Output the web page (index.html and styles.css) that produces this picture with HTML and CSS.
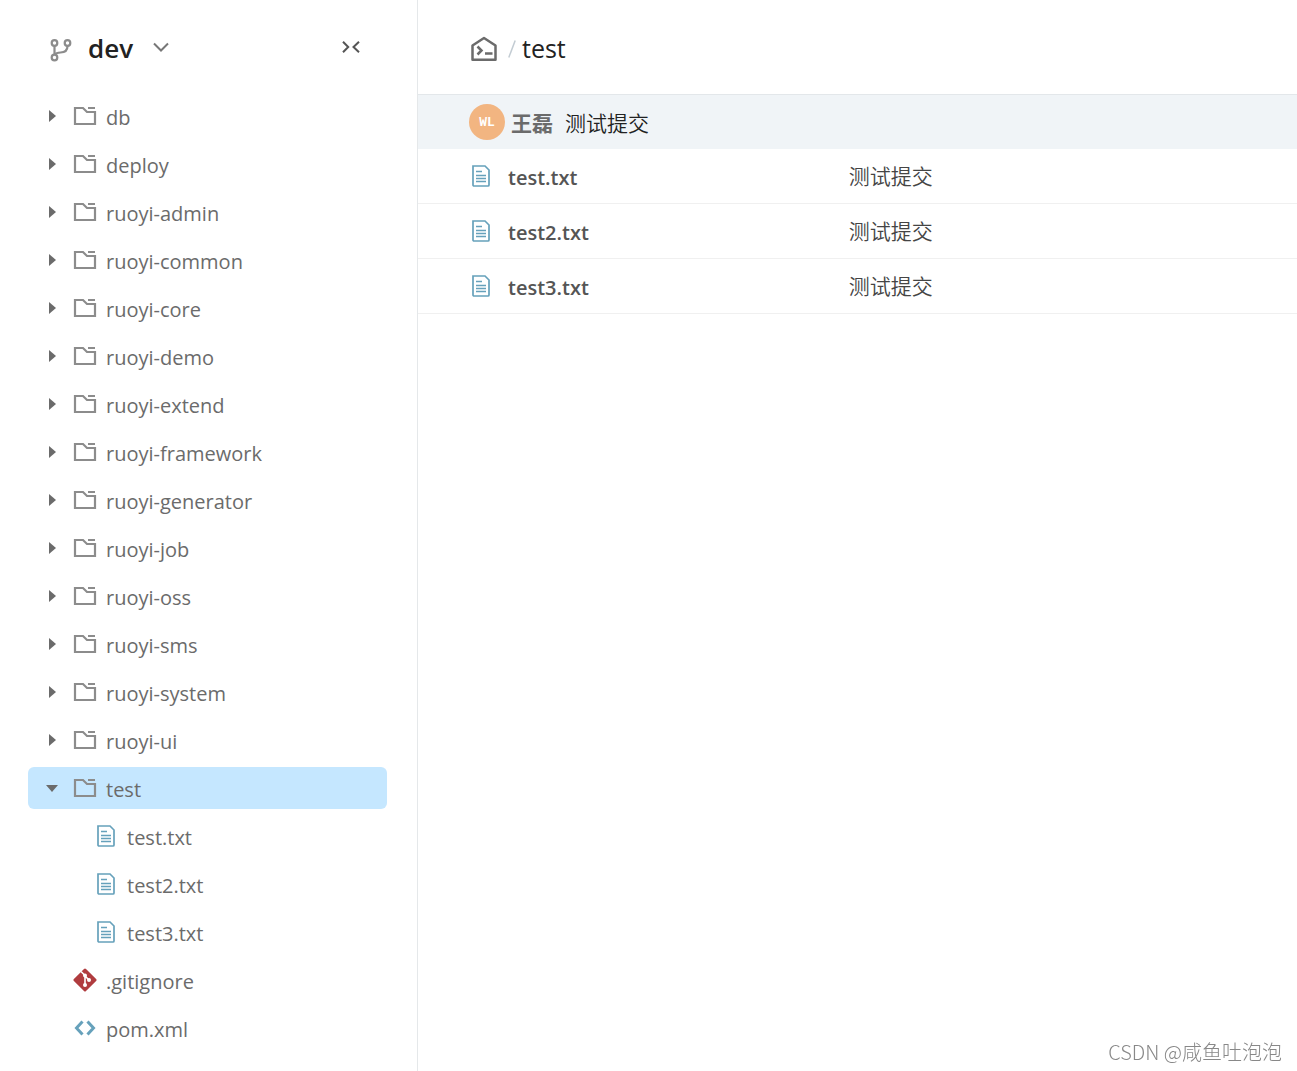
FILE: index.html
```html
<!DOCTYPE html>
<html lang="zh-CN">
<head>
<meta charset="utf-8">
<meta name="viewport" content="width=device-width, initial-scale=1">
<title>test - dev</title>
<link rel="stylesheet" href="styles.css">
</head>
<body>
<svg class="defs" aria-hidden="true">
  <symbol id="folder" viewBox="0 0 24 20"><path d="M2 2h8l4 4h8v12H2z" fill="none" stroke="currentColor" stroke-width="2.200"/><path d="M15 2h7" stroke="currentColor" stroke-width="2"/></symbol>
  <symbol id="file" viewBox="0 0 20 24"><path d="M2 2h12l4 4v15a1 1 0 0 1-1 1H3a1 1 0 0 1-1-1z" fill="none" stroke="currentColor" stroke-width="1.700"/><path d="M5 7.500h6M5 11.500h10M5 14.500h10M5 17.500h10" stroke="currentColor" stroke-width="1.500"/></symbol>
  <symbol id="caret" viewBox="0 0 8 12"><path d="M1 0 8 6 1 12z" fill="currentColor"/></symbol>
</svg>
<div class="layout">
  <aside class="sidebar">
    <header class="sidebar-head">
      <button class="branch" type="button">
        <svg class="branch-icon" viewBox="0 0 22 24"><g fill="none" stroke="currentColor" stroke-width="2.200"><circle cx="4.500" cy="5" r="2.800"/><circle cx="17.500" cy="5" r="2.800"/><circle cx="4.500" cy="19.500" r="2.800"/><path d="M4.500 8v9M17.500 8c0 5-3 6.500-7 6.500-3 0-5 1-6 2.500"/></g></svg>
        <span>dev</span>
        <svg class="chevron" viewBox="0 0 16 10"><path d="m1 1.500 7 7 7-7" fill="none" stroke="currentColor" stroke-width="2"/></svg>
      </button>
      <button class="collapse" type="button" aria-label="收起">
        <svg class="collapse-icon" viewBox="0 0 18 12"><path d="m1 .8 5.200 5.200L1 11.200M17 .8 11.500 6l5.500 5.200" fill="none" stroke="currentColor" stroke-width="2"/></svg>
      </button>
    </header>
    <ul class="tree">
      <li><button class="node" type="button"><svg class="caret"><use href="#caret"/></svg><svg class="folder"><use href="#folder"/></svg><span>db</span></button></li>
      <li><button class="node" type="button"><svg class="caret"><use href="#caret"/></svg><svg class="folder"><use href="#folder"/></svg><span>deploy</span></button></li>
      <li><button class="node" type="button"><svg class="caret"><use href="#caret"/></svg><svg class="folder"><use href="#folder"/></svg><span>ruoyi-admin</span></button></li>
      <li><button class="node" type="button"><svg class="caret"><use href="#caret"/></svg><svg class="folder"><use href="#folder"/></svg><span>ruoyi-common</span></button></li>
      <li><button class="node" type="button"><svg class="caret"><use href="#caret"/></svg><svg class="folder"><use href="#folder"/></svg><span>ruoyi-core</span></button></li>
      <li><button class="node" type="button"><svg class="caret"><use href="#caret"/></svg><svg class="folder"><use href="#folder"/></svg><span>ruoyi-demo</span></button></li>
      <li><button class="node" type="button"><svg class="caret"><use href="#caret"/></svg><svg class="folder"><use href="#folder"/></svg><span>ruoyi-extend</span></button></li>
      <li><button class="node" type="button"><svg class="caret"><use href="#caret"/></svg><svg class="folder"><use href="#folder"/></svg><span>ruoyi-framework</span></button></li>
      <li><button class="node" type="button"><svg class="caret"><use href="#caret"/></svg><svg class="folder"><use href="#folder"/></svg><span>ruoyi-generator</span></button></li>
      <li><button class="node" type="button"><svg class="caret"><use href="#caret"/></svg><svg class="folder"><use href="#folder"/></svg><span>ruoyi-job</span></button></li>
      <li><button class="node" type="button"><svg class="caret"><use href="#caret"/></svg><svg class="folder"><use href="#folder"/></svg><span>ruoyi-oss</span></button></li>
      <li><button class="node" type="button"><svg class="caret"><use href="#caret"/></svg><svg class="folder"><use href="#folder"/></svg><span>ruoyi-sms</span></button></li>
      <li><button class="node" type="button"><svg class="caret"><use href="#caret"/></svg><svg class="folder"><use href="#folder"/></svg><span>ruoyi-system</span></button></li>
      <li><button class="node" type="button"><svg class="caret"><use href="#caret"/></svg><svg class="folder"><use href="#folder"/></svg><span>ruoyi-ui</span></button></li>
      <li>
        <button class="node selected" type="button" aria-expanded="true"><svg class="caret open"><use href="#caret"/></svg><svg class="folder"><use href="#folder"/></svg><span>test</span></button>
        <ul class="tree nested">
          <li><a class="node" href="#test"><svg class="file"><use href="#file"/></svg><span>test.txt</span></a></li>
          <li><a class="node" href="#test2"><svg class="file"><use href="#file"/></svg><span>test2.txt</span></a></li>
          <li><a class="node" href="#test3"><svg class="file"><use href="#file"/></svg><span>test3.txt</span></a></li>
        </ul>
      </li>
      <li><a class="node" href="#gitignore"><svg class="git" viewBox="0 0 24 24"><path d="M11 .9a1.400 1.400 0 0 1 2 0L23.100 11a1.400 1.400 0 0 1 0 2L13 23.100a1.400 1.400 0 0 1-2 0L.9 13a1.400 1.400 0 0 1 0-2z" fill="#b03c3f"/><path d="m8 3.500 4 4v10M12 8l4 4" fill="none" stroke="#fff" stroke-width="1.600"/><g fill="#fff"><circle cx="12" cy="7.500" r="2"/><circle cx="16" cy="12" r="2"/><circle cx="12" cy="17" r="2"/></g></svg><span>.gitignore</span></a></li>
      <li><a class="node" href="#pom"><svg class="code" viewBox="0 0 24 24"><path d="M9.500 5.500 3.500 12l6 6.500M14.500 5.500l6 6.500-6 6.500" fill="none" stroke="currentColor" stroke-width="3"/></svg><span>pom.xml</span></a></li>
    </ul>
  </aside>
  <main class="content">
    <nav class="crumbs" aria-label="路径">
      <a class="home" href="#root" aria-label="根目录"><svg class="home-icon" viewBox="0 0 28 28"><g fill="none" stroke="currentColor" stroke-width="2.500"><path d="M2.500 10.500 14 3l11.500 7.500v14.300h-23z" stroke-linejoin="round"/><path d="m7.500 11.500 4 4-4 4M15 18.500h7.500"/></g></svg></a>
      <svg class="slash" viewBox="0 0 8 18"><path d="M.8 17.500 7.200.5" stroke="currentColor" stroke-width="1.500"/></svg>
      <span>test</span>
    </nav>
    <div class="commit">
      <span class="avatar">WL</span>
      <strong class="author">王磊</strong>
      <a class="message" href="#commit">测试提交</a>
    </div>
    <table class="files">
      <tbody>
        <tr><th scope="row"><a class="entry" href="#test"><svg class="file"><use href="#file"/></svg><span>test.txt</span></a></th><td>测试提交</td></tr>
        <tr><th scope="row"><a class="entry" href="#test2"><svg class="file"><use href="#file"/></svg><span>test2.txt</span></a></th><td>测试提交</td></tr>
        <tr><th scope="row"><a class="entry" href="#test3"><svg class="file"><use href="#file"/></svg><span>test3.txt</span></a></th><td>测试提交</td></tr>
      </tbody>
    </table>
  </main>
</div>
<div class="watermark">CSDN @咸鱼吐泡泡</div>
</body>
</html>
```
FILE: styles.css
```css
* {
  box-sizing: border-box;
}

body {
  margin: 0;
  color: #6b6b6b;
  background: #fff;
  font: 20px/24px "Open Sans", "Noto Sans CJK SC", sans-serif;
}

button {
  padding: 0;
  border: 0;
  background: none;
  color: inherit;
  font: inherit;
  cursor: pointer;
}

a {
  color: inherit;
  text-decoration: none;
}

svg {
  display: block;
  flex: none;
}

.defs {
  position: absolute;
  width: 0;
  height: 0;
}

.layout {
  display: flex;
  min-height: 100vh;
}

.sidebar {
  flex: 0 0 418px;
  padding: 0 30px 16px 28px;
  border-right: 1px solid #e5e8ea;
}

.sidebar-head {
  display: flex;
  align-items: center;
  justify-content: space-between;
  height: 95px;
  padding: 0 27px 0 22px;
}

.branch {
  display: flex;
  align-items: center;
  gap: 16px;
  color: #222;
  font-size: 26px;
  font-weight: 600;
}

.branch-icon {
  width: 22px;
  height: 24px;
  margin-top: 4px;
  color: #8c8c8c;
}

.chevron {
  width: 16px;
  height: 10px;
  margin: 0 0 2px 4px;
  color: #777;
}

.collapse {
  padding-bottom: 2px;
  color: #555;
}

.collapse-icon {
  width: 18px;
  height: 12px;
}

.tree {
  display: grid;
  gap: 6px;
  margin: 0;
  padding: 0;
  list-style: none;
}

.nested {
  margin-top: 6px;
  padding-left: 21px;
}

.node {
  display: grid;
  grid-template-columns: 20px 46px 1fr;
  align-items: center;
  width: 100%;
  height: 42px;
  padding-left: 14px;
  border-radius: 6px;
  text-align: left;
}

.node svg {
  grid-column: 2;
  justify-self: center;
}

.node span {
  padding: 3px 0 0;
  margin-left: -2px;
}

.node .caret {
  grid-column: 1;
  width: 8px;
  height: 12px;
}

.selected {
  background: #c5e7ff;
}

.open {
  transform: rotate(90deg);
}

.folder {
  width: 24px;
  height: 20px;
  color: #8c8c8c;
}

.file {
  width: 20px;
  height: 24px;
  color: #66a1bb;
}

.git,
.code {
  width: 24px;
  height: 24px;
  color: #66a1bb;
}

.content {
  flex: 1;
  min-width: 0;
}

.crumbs {
  display: flex;
  align-items: center;
  height: 94px;
  padding: 4px 52px 0;
  color: #222;
  font-size: 25px;
}

.crumbs span {
  padding-bottom: 2px;
}

.home {
  color: #6b6b6b;
}

.home-icon {
  width: 28px;
  height: 28px;
}

.slash {
  width: 8px;
  height: 18px;
  margin: 0 6px 0 10px;
  color: #c3ccd3;
}

.commit {
  display: flex;
  align-items: center;
  height: 55px;
  padding: 0 51px;
  border-top: 1px solid #e3e7ea;
  background: #f0f4f7;
  font-size: 21px;
}

.avatar {
  display: grid;
  place-items: center;
  width: 36px;
  height: 36px;
  padding-top: 2px;
  margin-right: 6px;
  border-radius: 50%;
  background: #f2b581;
  color: #fff;
  font: bold 13px/16px "Liberation Mono", monospace;
}

.author,
.message {
  padding-top: 2px;
}

.message {
  margin-left: 12px;
  color: #222;
  font-weight: 350;
}

.files {
  width: 100%;
  border-collapse: separate;
  border-spacing: 0;
  table-layout: fixed;
}

.files th,
.files td {
  height: 55px;
  padding: 0;
  border-bottom: 1px solid #f0f0f0;
  text-align: left;
}

.files th {
  width: 49%;
  padding-left: 53px;
  color: #555;
  font-weight: 600;
}

.files td {
  color: #444;
  font-size: 21px;
  font-weight: 350;
}

.entry {
  display: flex;
  align-items: center;
  gap: 17px;
}

.entry span {
  padding-top: 3px;
}

.watermark {
  position: fixed;
  right: 15px;
  bottom: 7px;
  color: #888;
  font: 300 20px/24px "Noto Sans CJK SC", sans-serif;
}
```
